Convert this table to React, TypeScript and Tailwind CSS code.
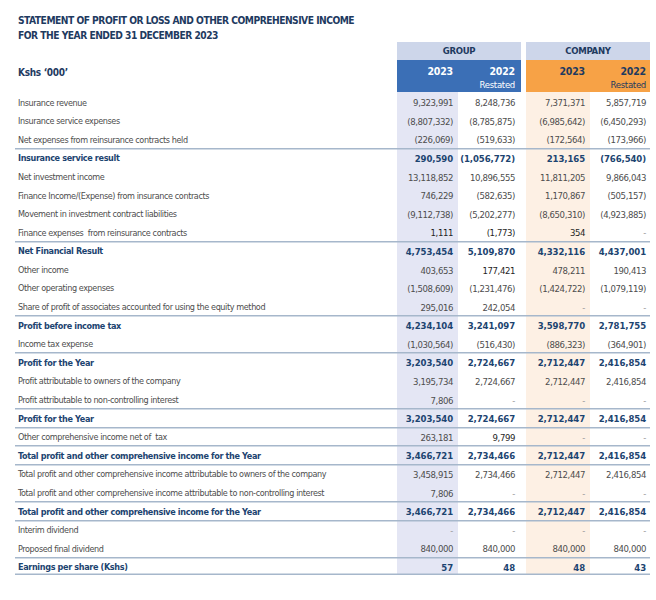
import React from "react";

type Row = {
  label: string;
  values: string[];
  bold?: boolean;
  line?: boolean;
  lineBelow?: boolean;
  dark?: number[];
};

const rows: Row[] = [
  { label: "Insurance revenue", values: ["9,323,991", "8,248,736", "7,371,371", "5,857,719"] },
  { label: "Insurance service expenses", values: ["(8,807,332)", "(8,785,875)", "(6,985,642)", "(6,450,293)"] },
  { label: "Net expenses from reinsurance contracts held", values: ["(226,069)", "(519,633)", "(172,564)", "(173,966)"] },
  { label: "Insurance service result", values: ["290,590", "(1,056,772)", "213,165", "(766,540)"], bold: true, line: true },
  { label: "Net investment income", values: ["13,118,852", "10,896,555", "11,811,205", "9,866,043"] },
  { label: "Finance Income/(Expense) from insurance contracts", values: ["746,229", "(582,635)", "1,170,867", "(505,157)"] },
  { label: "Movement in investment contract liabilities", values: ["(9,112,738)", "(5,202,277)", "(8,650,310)", "(4,923,885)"] },
  { label: "Finance expenses  from reinsurance contracts", values: ["1,111", "(1,773)", "354", "-"], dark: [0, 1, 2] },
  { label: "Net Financial Result", values: ["4,753,454", "5,109,870", "4,332,116", "4,437,001"], bold: true, line: true },
  { label: "Other income", values: ["403,653", "177,421", "478,211", "190,413"], dark: [1] },
  { label: "Other operating expenses", values: ["(1,508,609)", "(1,231,476)", "(1,424,722)", "(1,079,119)"] },
  { label: "Share of profit of associates accounted for using the equity method", values: ["295,016", "242,054", "-", "-"] },
  { label: "Profit before income tax", values: ["4,234,104", "3,241,097", "3,598,770", "2,781,755"], bold: true, line: true },
  { label: "Income tax expense", values: ["(1,030,564)", "(516,430)", "(886,323)", "(364,901)"] },
  { label: "Profit for the Year", values: ["3,203,540", "2,724,667", "2,712,447", "2,416,854"], bold: true, line: true },
  { label: "Profit attributable to owners of the company", values: ["3,195,734", "2,724,667", "2,712,447", "2,416,854"] },
  { label: "Profit attributable to non-controlling interest", values: ["7,806", "-", "-", "-"] },
  { label: "Profit for the Year", values: ["3,203,540", "2,724,667", "2,712,447", "2,416,854"], bold: true, line: true },
  { label: "Other comprehensive income net of  tax", values: ["263,181", "9,799", "-", "-"], line: true, dark: [1] },
  { label: "Total profit and other comprehensive income for the Year", values: ["3,466,721", "2,734,466", "2,712,447", "2,416,854"], bold: true, line: true },
  { label: "Total profit and other comprehensive income attributable to owners of the company", values: ["3,458,915", "2,734,466", "2,712,447", "2,416,854"], line: true },
  { label: "Total profit and other comprehensive income attributable to non-controlling interest", values: ["7,806", "-", "-", "-"] },
  { label: "Total profit and other comprehensive income for the Year", values: ["3,466,721", "2,734,466", "2,712,447", "2,416,854"], bold: true, line: true },
  { label: "Interim dividend", values: ["-", "-", "-", "-"], line: true },
  { label: "Proposed final dividend", values: ["840,000", "840,000", "840,000", "840,000"] },
  { label: "Earnings per share (Kshs)", values: ["57", "48", "48", "43"], bold: true, line: true, lineBelow: true },
];

const font = "font-['Liberation_Sans_Narrow','DejaVu_Sans_Condensed','Roboto',sans-serif]";

const lineTop = "shadow-[inset_0_1.5px_0_#a6b7cb]";
const lineBoth = "shadow-[inset_0_1.5px_0_#a6b7cb,inset_0_-1.5px_0_#a6b7cb]";

const colBg = ["bg-[#e4e6f4]", "bg-white", "bg-[#fdf0e4]", "bg-white"];
const colPad = ["pr-[5px]", "pr-[6px]", "pr-[5px]", "pr-[4px]"];

export default function App() {
  return (
    <div className={`bg-white w-[656px] h-[600px] ${font}`}>
      <div className="pl-[18px] pt-[13px] text-[10.2px] tracking-[-0.5px] leading-[15px] font-bold text-[#1e3a5f] h-[42px]">
        <div>STATEMENT OF PROFIT OR LOSS AND OTHER COMPREHENSIVE INCOME</div>
        <div>FOR THE YEAR ENDED 31 DECEMBER 2023</div>
      </div>

      <div className="ml-[15px] w-[635px] grid grid-cols-[382px_61px_63px_5px_64px_60px]">
        {/* Group / Company band */}
        <div className="h-[18px]" />
        <div className="col-span-2 h-[18px] bg-[#cdd6ea] flex items-center justify-center pt-[1px] text-[9.5px] tracking-[-0.3px] font-bold text-[#1e3a5f]">
          GROUP
        </div>
        <div />
        <div className="col-span-2 h-[18px] bg-[#cdd6ea] flex items-center justify-center pt-[1px] text-[9.5px] tracking-[-0.3px] font-bold text-[#1e3a5f]">
          COMPANY
        </div>

        {/* Year band */}
        <div className="h-[32px] pl-[3px] pt-[5px] text-[10px] tracking-[-0.3px] font-bold text-[#1e3a5f]">Kshs ‘000’</div>
        <div className="h-[32px] bg-[#3b6fb6] pr-[5px] pt-[5px] text-right text-[10.5px] tracking-[-0.2px] font-bold text-white leading-[13px]">
          2023
        </div>
        <div className="h-[32px] bg-[#3b6fb6] pr-[6px] pt-[5px] text-right text-white leading-[13px] tracking-[-0.2px]">
          <div className="text-[10.5px] font-bold">2022</div>
          <div className="text-[9.5px] tracking-[-0.3px]">Restated</div>
        </div>
        <div />
        <div className="h-[32px] bg-[#f7a246] pr-[5px] pt-[5px] text-right text-[10.5px] tracking-[-0.2px] font-bold text-[#1e3a5f] leading-[13px]">
          2023
        </div>
        <div className="h-[32px] bg-[#f7a246] pr-[4px] pt-[5px] text-right text-[#1e3a5f] leading-[13px] tracking-[-0.2px]">
          <div className="text-[10.5px] font-bold">2022</div>
          <div className="text-[9.5px] tracking-[-0.3px]">Restated</div>
        </div>

        {/* Body */}
        {rows.map((row, ri) => {
          const ln = row.lineBelow ? lineBoth : row.line ? lineTop : "";
          const cell = `h-[18.6px] flex items-center pt-[4px] ${ln}`;
          return (
            <React.Fragment key={ri}>
              <div
                className={`${cell} pl-[3px] whitespace-pre text-[9px] ${
                  row.bold ? "font-bold text-[#1c4470] tracking-[-0.35px]" : "text-[#4d4d4d] tracking-[-0.4px]"
                }`}
              >
                {row.label}
              </div>
              {row.values.map((v, vi) => {
                const isDash = v === "-";
                const color = row.bold
                  ? "font-bold text-[#1c4470] tracking-[-0.1px]"
                  : isDash
                  ? "text-[#9a9a9a] tracking-[-0.4px]"
                  : row.dark?.includes(vi)
                  ? "text-[#1f1f1f] tracking-[-0.4px]"
                  : "text-[#4d4d4d] tracking-[-0.4px]";
                return (
                  <React.Fragment key={vi}>
                    {vi === 2 && <div className={`${cell} bg-white`} />}
                    <div
                      className={`${cell} ${colBg[vi]} ${colPad[vi]} justify-end text-[9.5px] ${color}`}
                    >
                      {v}
                    </div>
                  </React.Fragment>
                );
              })}
            </React.Fragment>
          );
        })}
      </div>
    </div>
  );
}
